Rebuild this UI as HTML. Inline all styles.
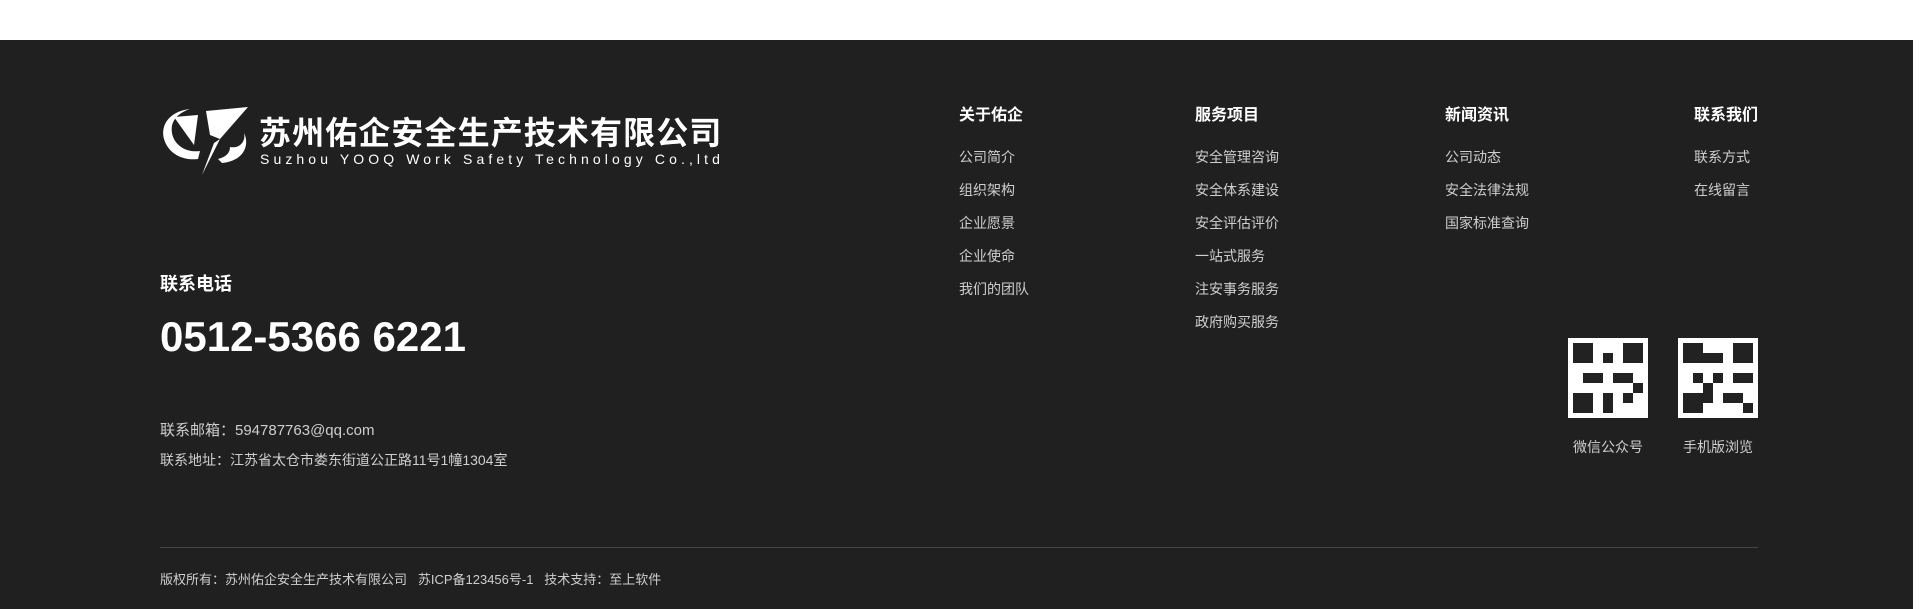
<!DOCTYPE html>
<html><head><meta charset="utf-8"><style>
*{margin:0;padding:0;box-sizing:border-box}
body{width:1920px;height:609px;background:#fff;position:relative;overflow:hidden;font-family:"Liberation Sans","Noto Sans CJK SC",sans-serif}
.bg{position:absolute;left:0;top:40px;width:1913px;height:569px;background:#202020}
.a{position:absolute;white-space:nowrap}
.h{color:#fff;font-weight:bold;font-size:16px}
.l{color:#cfcfcf;font-size:14px}
.qr{position:absolute;width:80px;height:80px;background:#fff;padding:5px}
</style></head><body>
<div class="bg"></div>
<svg class="a" style="left:160px;top:105px" width="90" height="72" viewBox="0 0 90 72">
<path d="M30 4 C10 6 0 20 4 34 C8 48 22 56 38 54 L40 46 C26 48 14 40 12 28 C10 16 18 8 30 4Z" fill="#fff"/>
<path d="M14 12 L38 10 L34 40 Z" fill="#fff"/>
<path d="M46 6 L88 2 L60 34 L50 30 Z" fill="#fff"/>
<path d="M60 34 L42 70 L54 38 Z" fill="#fff"/>
<path d="M70 42 C80 44 86 36 84 28 C90 40 84 56 62 58 L58 54 C66 52 70 48 70 42Z" fill="#fff"/>
</svg>
<div class="a" style="left:259px;top:114px;color:#fff;font-size:32px;letter-spacing:1.1px;line-height:38px;font-weight:bold">苏州佑企安全生产技术有限公司</div>
<div class="a" style="left:260px;top:151px;color:#fff;font-size:14px;letter-spacing:4.1px;line-height:16px">Suzhou YOOQ Work Safety Technology Co.,ltd</div>
<div class="a" style="left:160px;top:270px;color:#fff;font-size:18px;font-weight:bold">联系电话</div>
<div class="a" style="left:160px;top:313px;color:#fff;font-size:42px;font-weight:bold">0512-5366 6221</div>
<div class="a l" style="left:160px;top:419px;font-size:15px">联系邮箱：594787763@qq.com</div>
<div class="a l" style="left:160px;top:450px;font-size:14px">联系地址：江苏省太仓市娄东街道公正路11号1幢1304室</div>

<div class="a h" style="left:959px;top:101px">关于佑企</div>
<div class="a l" style="left:959px;top:141px;line-height:33px">公司简介<br>组织架构<br>企业愿景<br>企业使命<br>我们的团队</div>
<div class="a h" style="left:1195px;top:101px">服务项目</div>
<div class="a l" style="left:1195px;top:141px;line-height:33px">安全管理咨询<br>安全体系建设<br>安全评估评价<br>一站式服务<br>注安事务服务<br>政府购买服务</div>
<div class="a h" style="left:1445px;top:101px">新闻资讯</div>
<div class="a l" style="left:1445px;top:141px;line-height:33px">公司动态<br>安全法律法规<br>国家标准查询</div>
<div class="a h" style="left:1694px;top:101px">联系我们</div>
<div class="a l" style="left:1694px;top:141px;line-height:33px">联系方式<br>在线留言</div>

<div class="qr" style="left:1568px;top:338px"><svg width="70" height="70" viewBox="0 0 7 7"><rect width="7" height="7" fill="#fff"/><path d="M0 0h2v2h-2zM5 0h2v2h-2zM0 5h2v2h-2zM3 1h1v1h-1zM2 3h1v1h-1zM4 3h2v1h-2zM3 5h1v2h-1zM5 5h1v1h-1zM6 4h1v1h-1zM1 3h1v1h-1z" fill="#222"/></svg></div>
<div class="qr" style="left:1678px;top:338px"><svg width="70" height="70" viewBox="0 0 7 7"><rect width="7" height="7" fill="#fff"/><path d="M0 0h2v2h-2zM5 0h2v2h-2zM0 5h2v2h-2zM2 1h2v1h-2zM3 3h1v1h-1zM1 3h1v1h-1zM5 3h2v1h-2zM4 5h2v1h-2zM6 6h1v1h-1zM2 4h1v2h-1z" fill="#222"/></svg></div>
<div class="a l" style="left:1573px;top:437px;font-size:14px">微信公众号</div>
<div class="a l" style="left:1683px;top:437px;font-size:14px">手机版浏览</div>

<div class="a" style="left:160px;top:547px;width:1598px;height:1px;background:#444"></div>
<div class="a l" style="left:160px;top:569px;font-size:13px">版权所有：苏州佑企安全生产技术有限公司&nbsp;&nbsp;&nbsp;苏ICP备123456号-1&nbsp;&nbsp;&nbsp;技术支持：至上软件</div>
</body></html>
